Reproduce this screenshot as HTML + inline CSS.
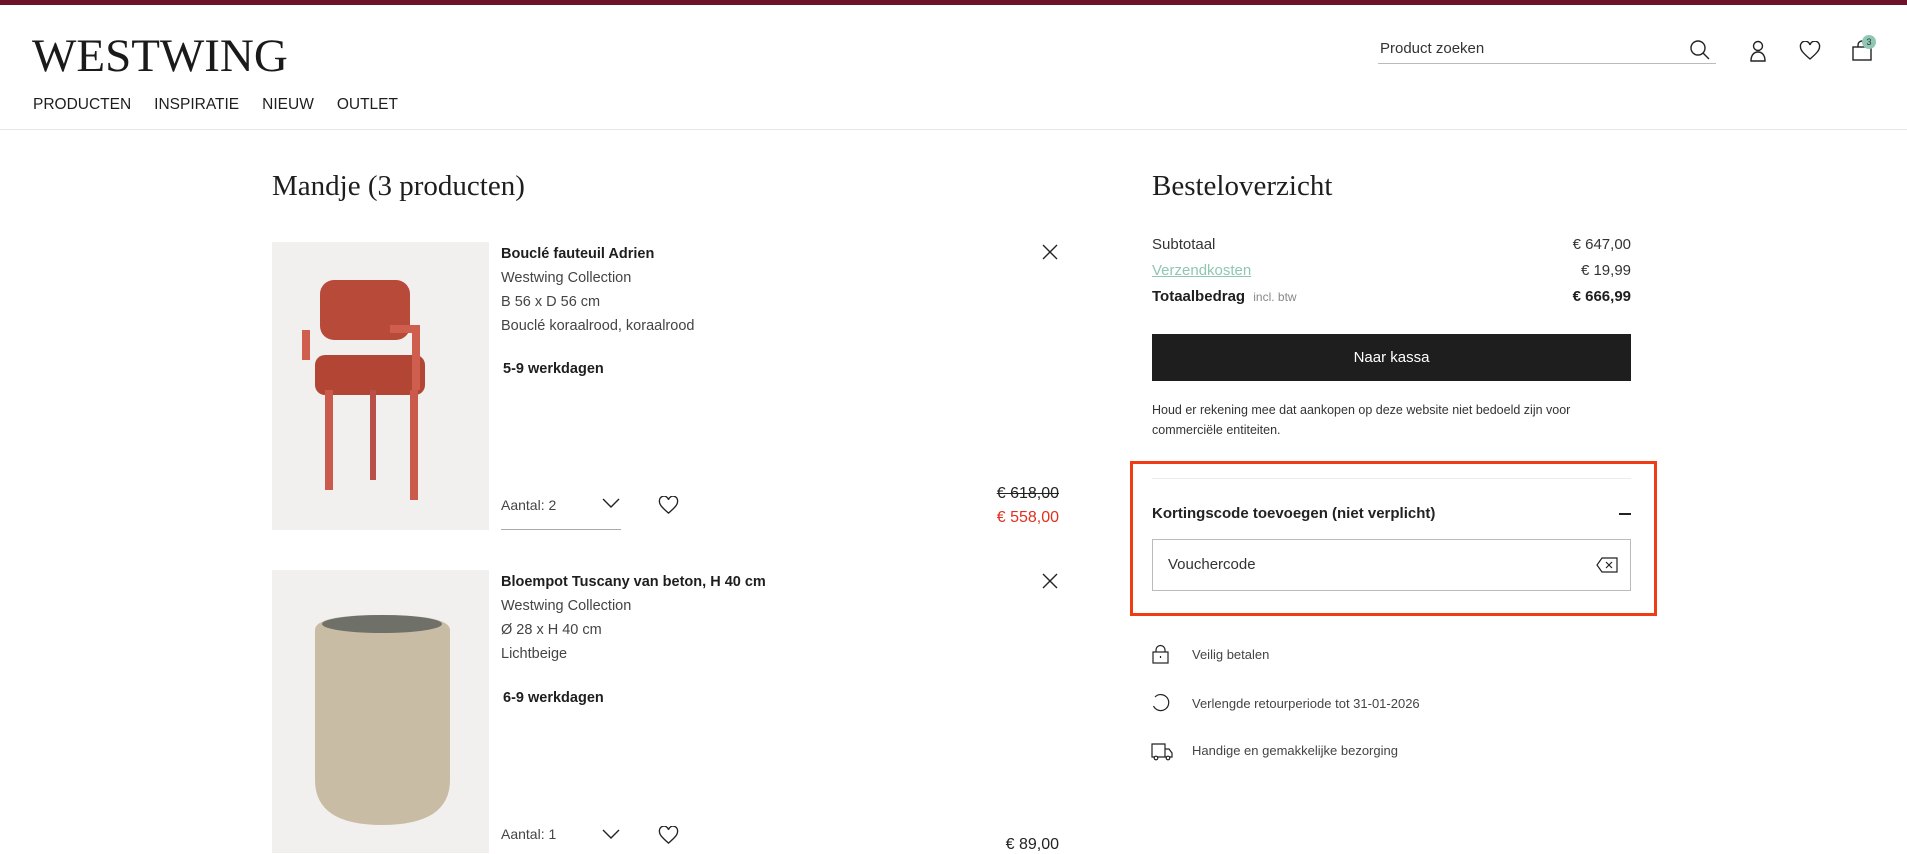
<!DOCTYPE html>
<html><head><meta charset="utf-8"><style>
*{margin:0;padding:0;box-sizing:border-box}
body{width:1907px;height:853px;overflow:hidden;background:#fff;font-family:"Liberation Sans",sans-serif;color:#1e1e1e;position:relative}
.a{position:absolute;white-space:nowrap}
.serif{font-family:"Liberation Serif",serif}
.t{font-size:14.5px;line-height:18px;color:#444}
.b{font-weight:bold;color:#1e1e1e}
svg{position:absolute;fill:none;stroke:#222;stroke-width:1.4}
</style></head><body>
<div class="a" style="left:0;top:0;width:1907px;height:5px;background:#6e1329"></div>
<div class="a serif" style="left:32px;top:31px;font-size:47px;line-height:50px;color:#1a1a1a">WESTWING</div>
<div class="a" style="left:33px;top:96px;font-size:15.5px;line-height:18px"><span>PRODUCTEN</span><span style="margin-left:23px">INSPIRATIE</span><span style="margin-left:23px">NIEUW</span><span style="margin-left:23px">OUTLET</span></div>
<div class="a" style="left:0;top:129px;width:1907px;height:1px;background:#e6e6e6"></div>
<div class="a" style="left:1380px;top:40px;font-size:15px;color:#333">Product zoeken</div>
<div class="a" style="left:1378px;top:63px;width:338px;height:1px;background:#bbb"></div>
<svg style="left:1689px;top:39px" width="22" height="22" viewBox="0 0 22 22"><circle cx="9" cy="9" r="7"/><path d="M14 14l6 6"/></svg>
<svg style="left:1748px;top:40px" width="20" height="22" viewBox="0 0 20 22"><circle cx="10" cy="6" r="4.5"/><path d="M3 21c0-6 3-9 7-9s7 3 7 9z"/></svg>
<svg style="left:1799px;top:41px" width="22" height="20" viewBox="0 0 22 20"><path d="M11 18C4 12 1.5 9 1.5 6A4.5 4.5 0 0 1 11 4a4.5 4.5 0 0 1 9.5 2c0 3-2.5 6-9.5 12z"/></svg>
<svg style="left:1851px;top:40px" width="22" height="22" viewBox="0 0 22 22"><rect x="2" y="7" width="18" height="13"/><path d="M7 7V5a4 4 0 0 1 8 0v2"/></svg>
<div class="a" style="left:1862px;top:35px;width:14px;height:14px;border-radius:7px;background:#8fc7b1;font-size:9px;line-height:14px;text-align:center;color:#234">3</div>

<div class="a serif" style="left:272px;top:169px;font-size:29px;line-height:34px">Mandje (3 producten)</div>

<div class="a" style="left:272px;top:242px;width:217px;height:288px;background:#f2f0ee"></div>
<svg style="left:300px;top:270px;stroke:none" width="160" height="230" viewBox="0 0 160 230"><rect x="20" y="10" width="90" height="60" rx="14" fill="#b84a3a"/><rect x="15" y="85" width="110" height="40" rx="10" fill="#b34534"/><rect x="25" y="120" width="8" height="100" fill="#c95a4c"/><rect x="110" y="120" width="8" height="110" fill="#c95a4c"/><rect x="2" y="60" width="8" height="30" fill="#cf5e4f"/><rect x="90" y="55" width="30" height="8" fill="#cf5e4f"/><rect x="112" y="60" width="8" height="60" fill="#cf5e4f"/><rect x="70" y="120" width="6" height="90" fill="#b85047"/></svg>
<div class="a t b" style="left:501px;top:245px">Bouclé fauteuil Adrien</div>
<div class="a t" style="left:501px;top:269px">Westwing Collection</div>
<div class="a t" style="left:501px;top:293px">B 56 x D 56 cm</div>
<div class="a t" style="left:501px;top:317px">Bouclé koraalrood, koraalrood</div>
<div class="a t b" style="left:503px;top:360px">5-9 werkdagen</div>
<svg style="left:1041px;top:243px" width="18" height="18" viewBox="0 0 18 18"><path d="M2 2l14 14M16 2L2 16"/></svg>
<div class="a" style="left:501px;top:497px;font-size:14px;color:#444">Aantal: 2</div>
<svg style="left:602px;top:497px" width="18" height="12" viewBox="0 0 18 12"><path d="M1 2l8 8 8-8"/></svg>
<div class="a" style="left:501px;top:529px;width:120px;height:1px;background:#aaa"></div>
<svg style="left:658px;top:496px" width="21" height="19" viewBox="0 0 22 20"><path d="M11 18C4 12 1.5 9 1.5 6A4.5 4.5 0 0 1 11 4a4.5 4.5 0 0 1 9.5 2c0 3-2.5 6-9.5 12z"/></svg>
<div class="a" style="right:848px;top:485px;font-size:16px;text-decoration:line-through;color:#222">€ 618,00</div>
<div class="a" style="right:848px;top:509px;font-size:16px;color:#e1301f">€ 558,00</div>

<div class="a" style="left:272px;top:570px;width:217px;height:283px;background:#f2f0ee"></div>
<svg style="left:310px;top:610px;stroke:none" width="150" height="225" viewBox="0 0 150 225"><path d="M5 20 Q5 5 70 5 Q140 5 140 20 L140 170 Q140 215 72 215 Q5 215 5 170Z" fill="#c9bca4"/><ellipse cx="72" cy="14" rx="60" ry="9" fill="#6f7068"/></svg>
<div class="a t b" style="left:501px;top:573px">Bloempot Tuscany van beton, H 40 cm</div>
<div class="a t" style="left:501px;top:597px">Westwing Collection</div>
<div class="a t" style="left:501px;top:621px">Ø 28 x H 40 cm</div>
<div class="a t" style="left:501px;top:645px">Lichtbeige</div>
<div class="a t b" style="left:503px;top:689px">6-9 werkdagen</div>
<svg style="left:1041px;top:572px" width="18" height="18" viewBox="0 0 18 18"><path d="M2 2l14 14M16 2L2 16"/></svg>
<div class="a" style="left:501px;top:826px;font-size:14px;color:#444">Aantal: 1</div>
<svg style="left:602px;top:828px" width="18" height="12" viewBox="0 0 18 12"><path d="M1 2l8 8 8-8"/></svg>
<svg style="left:658px;top:826px" width="21" height="19" viewBox="0 0 22 20"><path d="M11 18C4 12 1.5 9 1.5 6A4.5 4.5 0 0 1 11 4a4.5 4.5 0 0 1 9.5 2c0 3-2.5 6-9.5 12z"/></svg>
<div class="a" style="right:848px;top:836px;font-size:16px;color:#222">€ 89,00</div>

<div class="a serif" style="left:1152px;top:169px;font-size:29px;line-height:34px">Besteloverzicht</div>
<div class="a" style="left:1152px;top:236px;font-size:15px;color:#333">Subtotaal</div>
<div class="a" style="right:276px;top:236px;font-size:15px;color:#333">€ 647,00</div>
<div class="a" style="left:1152px;top:262px;font-size:15px;color:#8fc7b1;text-decoration:underline">Verzendkosten</div>
<div class="a" style="right:276px;top:262px;font-size:15px;color:#333">€ 19,99</div>
<div class="a" style="left:1152px;top:288px;font-size:15px;font-weight:bold">Totaalbedrag <span style="font-weight:normal;font-size:12px;color:#888;margin-left:4px">incl. btw</span></div>
<div class="a" style="right:276px;top:288px;font-size:15px;font-weight:bold">€ 666,99</div>
<div class="a" style="left:1152px;top:334px;width:479px;height:47px;background:#1e1e1e;color:#fff;font-size:15px;line-height:47px;text-align:center">Naar kassa</div>
<div class="a" style="left:1152px;top:400px;font-size:12.5px;line-height:20px;color:#333">Houd er rekening mee dat aankopen op deze website niet bedoeld zijn voor<br>commerciële entiteiten.</div>
<div class="a" style="left:1130px;top:461px;width:527px;height:155px;border:3px solid #f03c12"></div>
<div class="a" style="left:1152px;top:478px;width:479px;height:1px;background:#ececec"></div>
<div class="a" style="left:1152px;top:505px;font-size:15px;font-weight:bold;color:#222">Kortingscode toevoegen (niet verplicht)</div>
<div class="a" style="left:1619px;top:513px;width:12px;height:1.5px;background:#222"></div>
<div class="a" style="left:1152px;top:539px;width:479px;height:52px;border:1px solid #bbb"></div>
<div class="a" style="left:1168px;top:556px;font-size:15px;color:#333">Vouchercode</div>
<svg style="left:1596px;top:557px;stroke-width:1.2" width="22" height="16" viewBox="0 0 22 16"><path d="M6 1h15v14H6L1 8z"/><path d="M10 5l6 6M16 5l-6 6"/></svg>

<svg style="left:1152px;top:644px;stroke-width:1.2" width="18" height="20" viewBox="0 0 18 20"><rect x="1" y="8" width="15" height="11"/><path d="M4 8V6a4.5 4.5 0 0 1 9 0v2"/><path d="M8.5 12v2"/></svg>
<div class="a" style="left:1192px;top:647px;font-size:13px;color:#444">Veilig betalen</div>
<svg style="left:1151px;top:693px;stroke-width:1.2" width="20" height="20" viewBox="0 0 20 20"><path d="M4 4A8 8 0 1 1 2.5 13"/></svg>
<div class="a" style="left:1192px;top:696px;font-size:13px;color:#444">Verlengde retourperiode tot 31-01-2026</div>
<svg style="left:1151px;top:743px;stroke-width:1.2" width="22" height="18" viewBox="0 0 22 18"><path d="M1 1h13v13H1zM14 6h4l3 4v4h-7"/><circle cx="5" cy="15" r="1.8" fill="#fff"/><circle cx="17" cy="15" r="1.8" fill="#fff"/></svg>
<div class="a" style="left:1192px;top:743px;font-size:13px;color:#444">Handige en gemakkelijke bezorging</div>
</body></html>
